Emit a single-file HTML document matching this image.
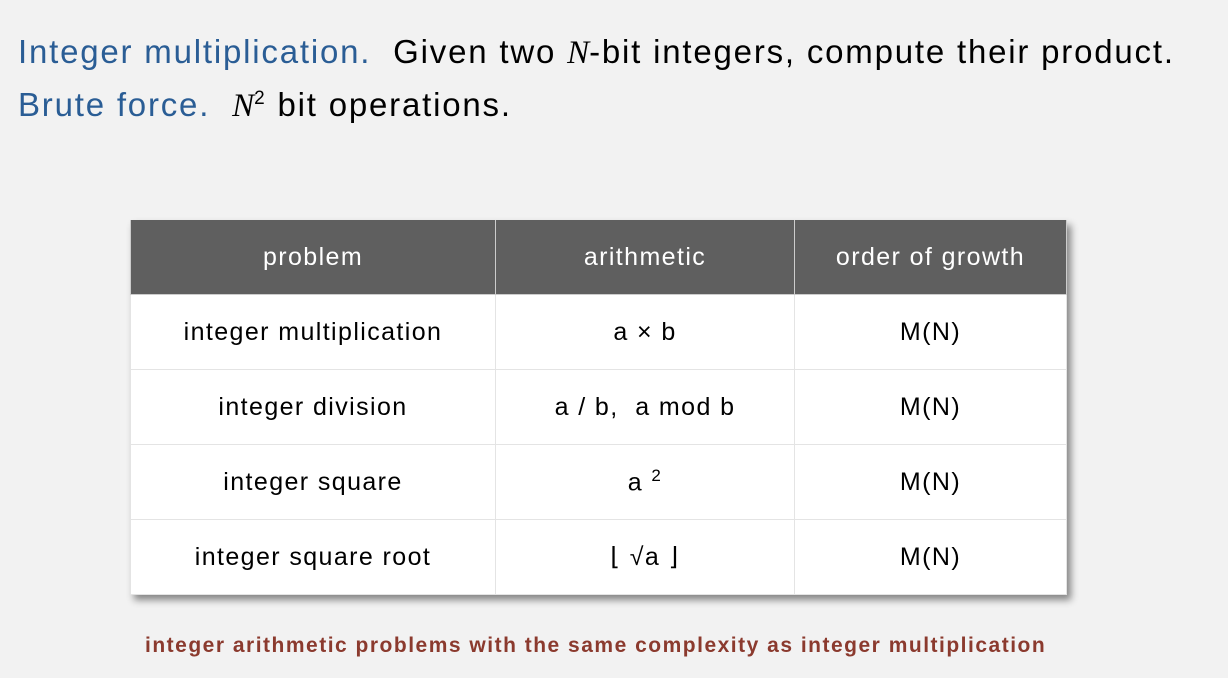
<!DOCTYPE html>
<html><head><style>
html,body{margin:0;padding:0;}
body{width:1228px;height:678px;background:#f2f2f2;font-family:"Liberation Sans",sans-serif;position:relative;overflow:hidden;}
.l{position:absolute;left:18px;font-size:33px;color:#000;white-space:nowrap;letter-spacing:1.8px;}
.b{color:#2a5d95;}
.m{font-family:"Liberation Serif",serif;font-style:italic;letter-spacing:0;}
table{position:absolute;left:130px;top:220px;border-collapse:collapse;box-shadow:4px 5px 7px rgba(0,0,0,0.45);}
td,th{text-align:center;font-size:25px;font-weight:normal;letter-spacing:1.4px;height:74px;padding:0;border:1px solid #e4e4e4;background:#fff;color:#000;}
th{background:#5f5f5f;color:#fff;border:1px solid #ccc;border-top:none;height:74px;}
.cap{position:absolute;left:145px;top:634px;font-size:21px;font-weight:bold;color:#8b3a2e;letter-spacing:1.5px;white-space:nowrap;}
</style></head><body>
<div class="l" style="top:33px"><span class="b">Integer multiplication.</span>&nbsp; Given two <span class="m">N</span>-bit integers, compute their product.</div>
<div class="l" style="top:86px"><span class="b">Brute force.</span>&nbsp; <span class="m">N</span><sup style="font-size:19px">2</sup> bit operations.</div>
<table>
<tr><th style="width:364px">problem</th><th style="width:298px">arithmetic</th><th style="width:271px">order of growth</th></tr>
<tr><td>integer multiplication</td><td>a × b</td><td>M(N)</td></tr>
<tr><td>integer division</td><td>a / b, &nbsp;a mod b</td><td>M(N)</td></tr>
<tr><td>integer square</td><td>a <sup style="font-size:17px">2</sup></td><td>M(N)</td></tr>
<tr><td>integer square root</td><td>⌊ √a ⌋</td><td>M(N)</td></tr>
</table>
<div class="cap">integer arithmetic problems with the same complexity as integer multiplication</div>
</body></html>
